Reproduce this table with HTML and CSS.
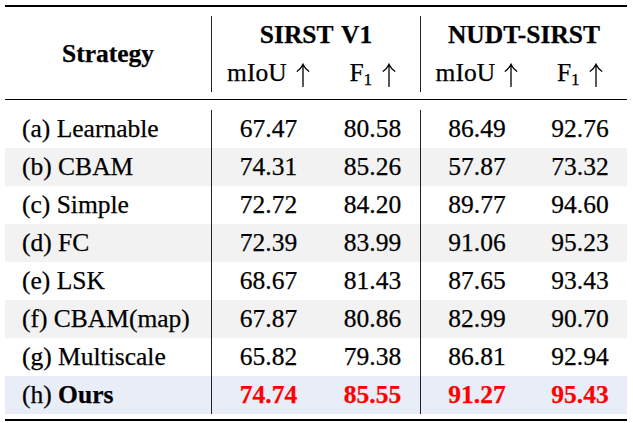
FILE: index.html
```html
<!DOCTYPE html>
<html>
<head>
<meta charset="utf-8">
<link rel="stylesheet" href="styles.css">
</head>
<body>
<div class="page">
  <div class="rule-thick"></div>
  <div class="head">
    <div class="h-strategy">Strategy</div>
    <div class="h-group">
      <div class="h-title">SIRST V1</div>
      <div class="h-sub h-sub1">
        <div>mIoU <svg class="up" viewBox="0 0 14 24" width="14" height="24"><path d="M7 23.5V1.5M1.2 8.2Q5 5.6 7 1.2Q9 5.6 12.8 8.2"/></svg></div>
        <div>F<sub>1</sub> <svg class="up" viewBox="0 0 14 24" width="14" height="24"><path d="M7 23.5V1.5M1.2 8.2Q5 5.6 7 1.2Q9 5.6 12.8 8.2"/></svg></div>
      </div>
    </div>
    <div class="h-group">
      <div class="h-title">NUDT-SIRST</div>
      <div class="h-sub h-sub2">
        <div>mIoU <svg class="up" viewBox="0 0 14 24" width="14" height="24"><path d="M7 23.5V1.5M1.2 8.2Q5 5.6 7 1.2Q9 5.6 12.8 8.2"/></svg></div>
        <div>F<sub>1</sub> <svg class="up" viewBox="0 0 14 24" width="14" height="24"><path d="M7 23.5V1.5M1.2 8.2Q5 5.6 7 1.2Q9 5.6 12.8 8.2"/></svg></div>
      </div>
    </div>
  </div>
  <div class="rule-thin"></div>
  <div class="body">
    <div class="row"><div class="name">(a) Learnable</div><div class="sep">67.47</div><div>80.58</div><div class="sep">86.49</div><div>92.76</div></div>
    <div class="row grey"><div class="name">(b) CBAM</div><div class="sep">74.31</div><div>85.26</div><div class="sep">57.87</div><div>73.32</div></div>
    <div class="row"><div class="name">(c) Simple</div><div class="sep">72.72</div><div>84.20</div><div class="sep">89.77</div><div>94.60</div></div>
    <div class="row grey"><div class="name">(d) FC</div><div class="sep">72.39</div><div>83.99</div><div class="sep">91.06</div><div>95.23</div></div>
    <div class="row"><div class="name">(e) LSK</div><div class="sep">68.67</div><div>81.43</div><div class="sep">87.65</div><div>93.43</div></div>
    <div class="row grey"><div class="name">(f) CBAM(map)</div><div class="sep">67.87</div><div>80.86</div><div class="sep">82.99</div><div>90.70</div></div>
    <div class="row"><div class="name">(g) Multiscale</div><div class="sep">65.82</div><div>79.38</div><div class="sep">86.81</div><div>92.94</div></div>
    <div class="row blue best"><div class="name">(h) <b>Ours</b></div><div class="sep">74.74</div><div>85.55</div><div class="sep">91.27</div><div>95.43</div></div>
  </div>
  <div class="rule-thick bottom"></div>
</div>
</body>
</html>
```
FILE: styles.css
```css
html, body {
  margin: 0;
  padding: 0;
  background: #fff;
}
.page {
  padding: 5px 0 0 5px;
  width: 622px;
  font-family: "Liberation Serif", "Tinos", "Times New Roman", serif;
  font-size: 25.5px;
  color: #000;
  -webkit-text-stroke: 0.25px currentColor;
}
.rule-thick {
  height: 2px;
  background: #000;
}
.rule-thick.bottom {
  margin-top: 5px;
}
.rule-thin {
  height: 1px;
  background: #000;
}
.head {
  display: flex;
  padding: 9px 0 7px;
  line-height: 38px;
}
.h-strategy {
  width: 206px;
  display: flex;
  align-items: center;
  justify-content: center;
  font-weight: bold;
}
.h-group {
  border-left: 1px solid #222;
  text-align: center;
}
.h-group:nth-child(2) { width: 208px; }
.h-group:nth-child(3) { width: 206px; }
.h-title {
  font-weight: bold;
  word-spacing: 2px;
}
.h-sub {
  display: grid;
}
.h-sub1 { grid-template-columns: 113px 95px; }
.h-sub2 { grid-template-columns: 112px 94px; }
sub {
  font-size: 0.68em;
  vertical-align: -0.22em;
  line-height: 0;
}
.up {
  vertical-align: -6px;
  margin-left: 3px;
  fill: none;
  stroke: #000;
  stroke-width: 1.3;
  stroke-linecap: round;
}
.body {
  margin-top: 10px;
}
.row {
  display: grid;
  grid-template-columns: 206px 114px 95px 113px 94px;
  height: 38px;
  line-height: 38px;
}
.row > div {
  box-sizing: border-box;
  text-align: center;
}
.row > .name {
  text-align: left;
  padding-left: 17px;
}
.row > .sep {
  border-left: 1px solid #222;
}
.grey { background: #f2f2f2; }
.blue { background: #e9edf8; }
.best > div:not(.name) {
  color: #ff0000;
  font-weight: bold;
}
```
